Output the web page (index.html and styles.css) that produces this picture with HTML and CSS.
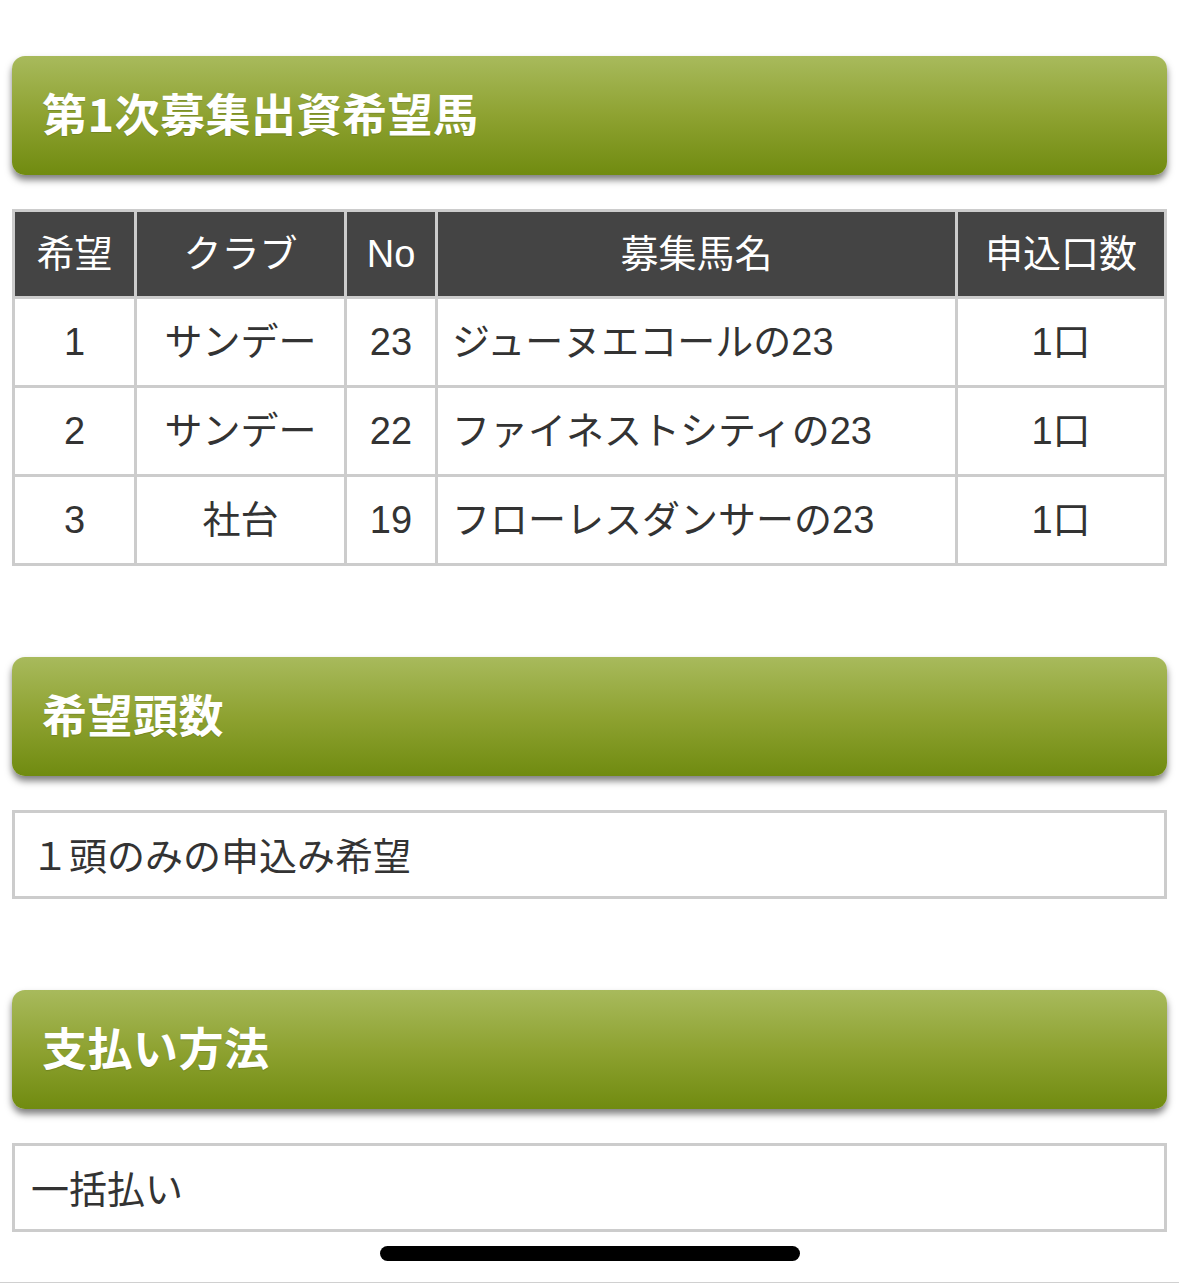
FILE: index.html
```html
<!DOCTYPE html>
<html lang="ja">
<head>
<meta charset="utf-8">
<title>出資希望</title>
<link rel="stylesheet" href="styles.css">
</head>
<body>
<main class="page">
  <section class="section">
    <h2 class="heading">第1次募集出資希望馬</h2>
    <table class="horses">
      <colgroup>
        <col class="c-rank"><col class="c-club"><col class="c-no"><col class="c-name"><col class="c-units">
      </colgroup>
      <thead>
        <tr><th>希望</th><th>クラブ</th><th>No</th><th>募集馬名</th><th>申込口数</th></tr>
      </thead>
      <tbody>
        <tr><td>1</td><td>サンデー</td><td>23</td><td class="name">ジューヌエコールの23</td><td>1口</td></tr>
        <tr><td>2</td><td>サンデー</td><td>22</td><td class="name">ファイネストシティの23</td><td>1口</td></tr>
        <tr><td>3</td><td>社台</td><td>19</td><td class="name">フローレスダンサーの23</td><td>1口</td></tr>
      </tbody>
    </table>
  </section>
  <section class="section">
    <h2 class="heading">希望頭数</h2>
    <div class="answer">１頭のみの申込み希望</div>
  </section>
  <section class="section">
    <h2 class="heading">支払い方法</h2>
    <div class="answer">一括払い</div>
  </section>
  <div class="footer-line"></div>
</main>
<div class="home-indicator"></div>
</body>
</html>
```

FILE: styles.css
```css
html, body {
  margin: 0;
  padding: 0;
  background: #ffffff;
}
body {
  font-family: "Liberation Sans", "Noto Sans CJK JP", sans-serif;
  color: #333333;
}
.page {
  padding: 56px 12px 0 12px;
  display: flex;
  flex-direction: column;
  gap: 91px;
}
.section {
  display: flex;
  flex-direction: column;
  gap: 34px;
}
.heading {
  margin: 0;
  height: 119px;
  box-sizing: border-box;
  display: flex;
  align-items: center;
  padding: 0 0 6px 30px;
  border-radius: 13px;
  background: linear-gradient(to bottom, #a8ba5c 0%, #8ea231 50%, #708b10 100%);
  box-shadow: 0 5px 7px rgba(0, 0, 0, 0.5);
  color: #ffffff;
  font-family: "Noto Sans CJK JP", sans-serif;
  font-weight: 700;
  font-size: 45px;
  letter-spacing: 0.5px;
  text-shadow: 0 1px 1px rgba(0, 0, 0, 0.15);
}
.horses {
  width: 100%;
  border-collapse: collapse;
  border: 3px solid #cccccc;
  table-layout: fixed;
  font-family: "Liberation Sans", "Noto Sans CJK JP", sans-serif;
  font-size: 38px;
  line-height: 44px;
}
.c-rank { width: 122px; }
.c-club { width: 210px; }
.c-no { width: 91px; }
.c-name { width: 520px; }
.c-units { width: auto; }
.horses th,
.horses td {
  border: 3px solid #cccccc;
  text-align: center;
  vertical-align: middle;
  padding: 0;
}
.horses th {
  background: #444444;
  color: #ffffff;
  font-weight: 400;
  height: 84px;
}
.horses td {
  height: 86px;
  color: #333333;
}
.horses td.name {
  text-align: left;
  padding-left: 14px;
  white-space: nowrap;
}
.answer {
  border: 3px solid #cccccc;
  height: 89px;
  box-sizing: border-box;
  display: flex;
  align-items: center;
  padding: 0 0 2px 16px;
  font-family: "Noto Sans CJK JP", sans-serif;
  font-size: 38px;
  color: #333333;
}
.footer-line {
  margin-top: -41px;
  margin-left: -12px;
  margin-right: -12px;
  border-top: 1px solid #d0d0d0;
  height: 1px;
}
.home-indicator {
  position: fixed;
  left: 380px;
  top: 1246px;
  width: 420px;
  height: 15px;
  border-radius: 8px;
  background: #000000;
}
```
